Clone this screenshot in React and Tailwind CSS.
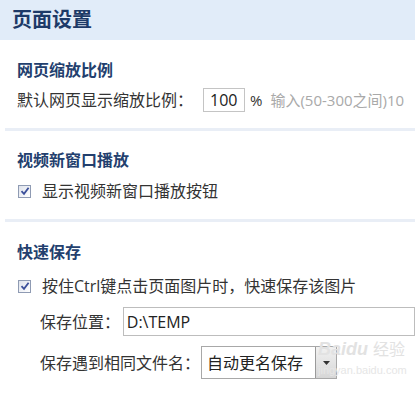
import React from 'react';

const font = "font-['Open_Sans','Noto_Sans_CJK_SC',sans-serif]";

const CheckBox = () => (
  <span className="flex h-[13px] w-[13px] shrink-0 items-center justify-center border border-[#8f9bb3] bg-gradient-to-br from-[#dfe3ec] to-[#ffffff]">
    <svg width="10" height="10" viewBox="0 0 10 10">
      <path d="M1.5 5.2 L4 7.8 L8.6 1.8" fill="none" stroke="#3b4f9a" strokeWidth="1.8" />
    </svg>
  </span>
);

const SectionTitle = ({ children }) => (
  <h2 className="text-[16px] font-bold leading-[22px] text-[#23406e]">{children}</h2>
);

const Divider = () => <div className="ml-[5px] h-[3px] bg-[#e9eef6]" />;

const App = () => {
  return (
    <div className={`relative h-[393px] w-[415px] overflow-hidden bg-white text-[#333] ${font}`}>
      {/* Header */}
      <div className="flex h-10 items-center bg-[#e1ecf9] pl-3">
        <h1 className="text-[20px] font-bold leading-none text-[#1d3a68]">页面设置</h1>
      </div>

      {/* 网页缩放比例 */}
      <div className="pl-[17px] pt-[19px] pb-4">
        <SectionTitle>网页缩放比例</SectionTitle>
        <div className="mt-[7px] flex h-6 items-center whitespace-nowrap text-[16px]">
          <span className="w-[186px]">默认网页显示缩放比例：</span>
          <input
            readOnly
            value="100"
            className="h-6 w-[42px] border border-[#c4c4c4] bg-white pl-[6px] text-[16px] text-[#222] outline-none"
          />
          <span className="ml-[5px] text-[15px]">%</span>
          <span className="ml-[8px] text-[15px] text-[#a9a9a9]">输入(50-300之间)10</span>
        </div>
      </div>
      <Divider />

      {/* 视频新窗口播放 */}
      <div className="pl-[17px] pt-[18px] pb-[17px]">
        <SectionTitle>视频新窗口播放</SectionTitle>
        <div className="mt-[9px] flex h-[22px] items-center gap-[11px] text-[16px]">
          <span className="ml-[1px]"><CheckBox /></span>
          <span>显示视频新窗口播放按钮</span>
        </div>
      </div>
      <Divider />

      {/* 快速保存 */}
      <div className="pl-[17px] pt-[19px]">
        <SectionTitle>快速保存</SectionTitle>
        <div className="mt-3 flex h-[22px] items-center gap-[11px] whitespace-nowrap text-[16px]">
          <span className="ml-[1px]"><CheckBox /></span>
          <span>按住Ctrl键点击页面图片时，快速保存该图片</span>
        </div>
        <div className="mt-[10px] flex h-[29px] items-center whitespace-nowrap pl-[23px] text-[16px]">
          <span className="w-[85px]">保存位置：</span>
          <input
            readOnly
            value="D:\TEMP"
            className="h-[29px] w-[300px] border border-[#bdbdbd] bg-white pl-[3px] text-[16px] text-[#222] outline-none"
          />
        </div>
        <div className="mt-[10px] flex h-[33px] items-center whitespace-nowrap pl-[23px] text-[16px]">
          <span className="w-[161px]">保存遇到相同文件名：</span>
          <div className="flex h-[33px] w-[136px] border border-[#a8a8a8] bg-white">
            <span className="flex flex-1 items-center pl-[5px] text-[16px] text-[#222]">自动更名保存</span>
            <span className="flex w-[21px] items-center justify-center border-l border-[#9a9a9a] bg-gradient-to-b from-[#f2f2f2] to-[#d6d6d6]">
              <svg width="7" height="4" viewBox="0 0 7 4">
                <path d="M0 0 L7 0 L3.5 4 Z" fill="#333" />
              </svg>
            </span>
          </div>
        </div>
      </div>

      {/* watermark */}
      <div className="pointer-events-none absolute left-[318px] top-[340px] flex flex-col items-start whitespace-nowrap">
        <div className="flex items-center gap-[5px] leading-none text-[#e2e2e2]">
          <span className="font-['Liberation_Sans',sans-serif] text-[18px] font-bold italic">Baidu</span>
          <span className="text-[16px]">经验</span>
        </div>
        <span className="mt-[7px] font-['Liberation_Sans',sans-serif] text-[11px] leading-none text-[#e6e6e6]">jingyan.baidu.com</span>
      </div>
    </div>
  );
};

export default App;
